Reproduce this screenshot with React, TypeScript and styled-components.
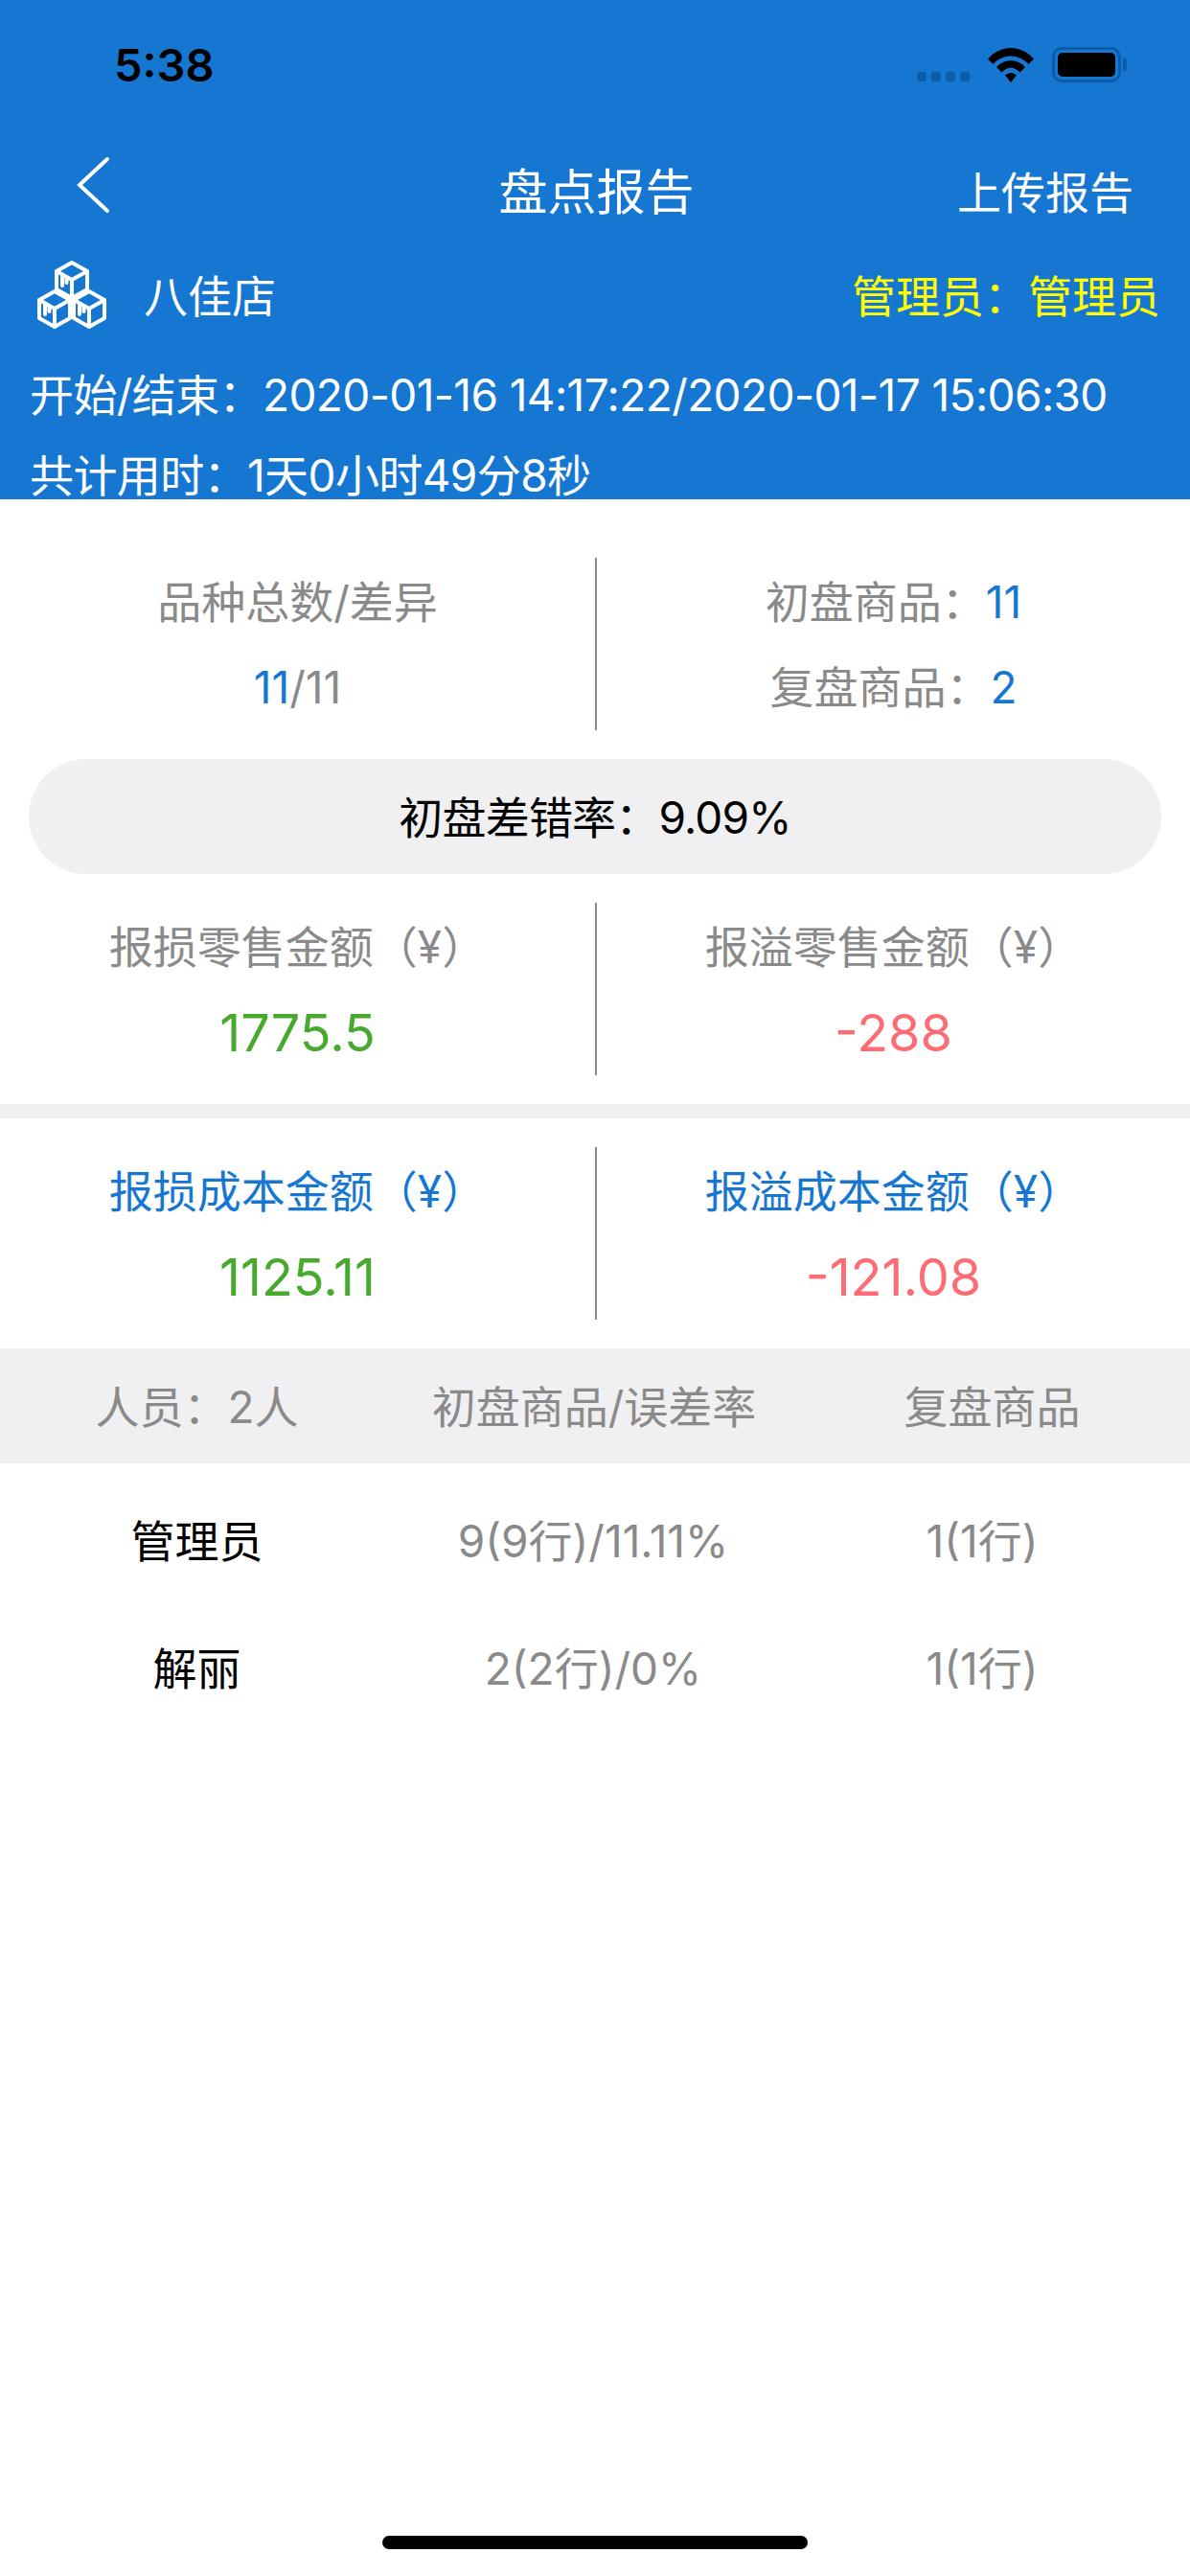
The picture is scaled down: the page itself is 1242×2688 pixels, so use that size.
import React from "react";
import styled, { createGlobalStyle } from "styled-components";

const BLUE = "#1677d2";
const GRAY = "#8a8a8a";
const GREEN = "#48a92f";
const RED = "#fb6c74";
const BAND = "#f0eff2";

const tones: Record<string, string> = { blue: BLUE, gray: GRAY, green: GREEN, red: RED };

const GlobalStyle = createGlobalStyle`
  html, body {
    margin: 0;
    padding: 0;
    background: #fff;
  }
  body {
    font-family: Inter, "Noto Sans CJK SC", sans-serif;
  }
`;

const Page = styled.div`
  position: relative;
  width: 1242px;
  height: 2688px;
  overflow: hidden;
  background: #fff;
`;

const Header = styled.header`
  height: 521px;
  background: ${BLUE};
  color: #fff;
`;

const StatusBar = styled.div`
  height: 136px;
  display: flex;
  justify-content: space-between;
  box-sizing: border-box;
  padding: 41px 72px 0 119px;
`;

const Clock = styled.span`
  font-size: 47px;
  line-height: 54px;
  font-weight: 600;
  color: #000;
`;

const StatusIcons = styled.div`
  display: flex;
  align-items: flex-start;
  padding-top: 8px;
`;

const SignalDots = styled.div`
  display: flex;
  gap: 5px;
  margin-top: 26px;
  margin-right: 19px;
`;

const SignalDot = styled.i`
  width: 10px;
  height: 10px;
  border-radius: 3px;
  background: #0c5ca8;
`;

const WifiIcon = styled.svg`
  width: 48px;
  height: 37px;
  margin-right: 19px;
`;

const Battery = styled.div`
  position: relative;
  width: 72px;
  height: 37px;
  box-sizing: border-box;
  border: 3px solid #0c5ca8;
  border-radius: 10px;
  padding: 3px;

  &::before {
    content: "";
    display: block;
    height: 100%;
    border-radius: 5px;
    background: #000;
  }

  &::after {
    content: "";
    position: absolute;
    top: 8px;
    right: -9px;
    width: 4px;
    height: 14px;
    border-radius: 0 7px 7px 0;
    background: #0c5ca8;
  }
`;

const NavBar = styled.nav`
  height: 114px;
  display: grid;
  grid-template-columns: 1fr auto 1fr;
  align-items: center;
  box-sizing: border-box;
  padding: 0 59px 0 80px;
`;

const BackIcon = styled.svg`
  width: 36px;
  height: 58px;
`;

const NavTitle = styled.h1`
  position: relative;
  left: -9px;
  margin: 16px 0 0;
  font-size: 51px;
  line-height: 60px;
  font-weight: 400;
`;

const NavAction = styled.span`
  justify-self: end;
  margin-top: 16px;
  font-size: 46px;
  line-height: 60px;
`;

const StoreRow = styled.div`
  height: 112px;
  display: flex;
  align-items: center;
  box-sizing: border-box;
  padding: 0 31px 0 38px;
`;

const StoreIcon = styled.svg`
  width: 74px;
  height: 72px;
  margin: 4px 38px 0 0;
`;

const StoreName = styled.span`
  flex: 1;
  font-size: 46px;
`;

const Manager = styled.span`
  font-size: 46px;
  color: #ffff00;
`;

const InfoLines = styled.div`
  display: flex;
  flex-direction: column;
  gap: 32px;
  padding: 24px 0 0 31px;
`;

const InfoLine = styled.div`
  font-size: 46px;
  line-height: 52px;
  letter-spacing: -0.6px;
  white-space: nowrap;
`;

const StatRow = styled.section<{ $top?: number }>`
  display: grid;
  grid-template-columns: 621px 621px;
  height: 180px;
  margin-top: ${(p) => p.$top ?? 30}px;
`;

const StatCell = styled.div<{ $divided?: boolean }>`
  display: flex;
  flex-direction: column;
  align-items: center;
  justify-content: center;
  gap: 37px;
  ${(p) => p.$divided && "border-left: 2px solid #888;"}
`;

const AmountCell = styled(StatCell)`
  gap: 35px;
  padding-top: 4px;
`;

const Label = styled.div<{ $tone?: string }>`
  font-size: 46px;
  line-height: 52px;
  color: ${(p) => tones[p.$tone ?? "gray"]};
  white-space: nowrap;
`;

const Amount = styled.div<{ $tone: string }>`
  font-size: 54px;
  line-height: 58px;
  color: ${(p) => tones[p.$tone]};
`;

const Tone = styled.span<{ $tone: string }>`
  color: ${(p) => tones[p.$tone]};
`;

const RatePill = styled.div`
  height: 120px;
  margin: 30px 30px 0;
  box-sizing: border-box;
  padding-bottom: 4px;
  display: flex;
  align-items: center;
  justify-content: center;
  border-radius: 60px;
  background: ${BAND};
  font-size: 46px;
  letter-spacing: -0.8px;
  color: #000;
`;

const Band = styled.div`
  height: 15px;
  margin-top: 30px;
  background: ${BAND};
`;

const TableHead = styled.div`
  display: grid;
  grid-template-columns: 411px 418px 413px;
  height: 120px;
  box-sizing: border-box;
  padding-bottom: 4px;
  margin-top: 30px;
  align-items: center;
  background: ${BAND};
  font-size: 46px;
  color: ${GRAY};
  text-align: center;
`;

const TableBody = styled.div`
  padding-top: 11px;
`;

const TableRow = styled.div`
  display: grid;
  grid-template-columns: 411px 416px 396px;
  height: 133px;
  align-items: center;
  font-size: 46px;
  color: ${GRAY};
  text-align: center;
`;

const Person = styled.span`
  color: #000;
`;

const HomeIndicator = styled.div`
  position: absolute;
  left: 399px;
  bottom: 28px;
  width: 444px;
  height: 14px;
  border-radius: 7px;
  background: #000;
`;

const Cube = ({ x, y }: { x: number; y: number }) => (
  <g transform={`translate(${x} ${y})`}>
    <path d="M18 2 34 11V30L18 39 2 30V11Z" />
    <path d="M2 11 18 20 34 11M18 20V39" />
    <path d="M8 16V26M12.500 18.500V23" />
  </g>
);

const members = [
  { name: "管理员", first: "9(9行)/11.11%", second: "1(1行)" },
  { name: "解丽", first: "2(2行)/0%", second: "1(1行)" },
];

export default function App() {
  return (
    <Page>
      <GlobalStyle />
      <Header>
        <StatusBar>
          <Clock>5:38</Clock>
          <StatusIcons>
            <SignalDots>
              {[0, 1, 2, 3].map((i) => (
                <SignalDot key={i} />
              ))}
            </SignalDots>
            <WifiIcon viewBox="0 0 48 37">
              <path d="M0 12.500C13-3 35-3 48 12.500L42.500 18C32 6.500 16 6.500 5.500 18Z" />
              <path d="M9 21C17 12 31 12 39 21L33.500 26.500C27.500 20 20.500 20 14.500 26.500Z" />
              <path d="M18 29.500C21.500 26 26.500 26 30 29.500L24 37Z" />
            </WifiIcon>
            <Battery />
          </StatusIcons>
        </StatusBar>
        <NavBar>
          <BackIcon viewBox="0 0 36 58" fill="none" stroke="#fff" strokeWidth="4" strokeLinecap="round">
            <path d="M32 2 3 29 32 56" />
          </BackIcon>
          <NavTitle>盘点报告</NavTitle>
          <NavAction>上传报告</NavAction>
        </NavBar>
        <StoreRow>
          <StoreIcon viewBox="0 0 74 72" fill="none" stroke="#fff" strokeWidth="4" strokeLinejoin="round" strokeLinecap="round">
            <Cube x={19} y={0} />
            <Cube x={1} y={30} />
            <Cube x={37} y={30} />
          </StoreIcon>
          <StoreName>八佳店</StoreName>
          <Manager>管理员：管理员</Manager>
        </StoreRow>
        <InfoLines>
          <InfoLine>开始/结束：2020-01-16 14:17:22/2020-01-17 15:06:30</InfoLine>
          <InfoLine>共计用时：1天0小时49分8秒</InfoLine>
        </InfoLines>
      </Header>

      <StatRow $top={61}>
        <StatCell>
          <Label>品种总数/差异</Label>
          <Label>
            <Tone $tone="blue">11</Tone>/11
          </Label>
        </StatCell>
        <StatCell $divided>
          <Label>
            初盘商品：<Tone $tone="blue">11</Tone>
          </Label>
          <Label>
            复盘商品：<Tone $tone="blue">2</Tone>
          </Label>
        </StatCell>
      </StatRow>

      <RatePill>初盘差错率：9.09%</RatePill>

      <StatRow>
        <AmountCell>
          <Label>报损零售金额（¥）</Label>
          <Amount $tone="green">1775.5</Amount>
        </AmountCell>
        <AmountCell $divided>
          <Label>报溢零售金额（¥）</Label>
          <Amount $tone="red">-288</Amount>
        </AmountCell>
      </StatRow>

      <Band />

      <StatRow>
        <AmountCell>
          <Label $tone="blue">报损成本金额（¥）</Label>
          <Amount $tone="green">1125.11</Amount>
        </AmountCell>
        <AmountCell $divided>
          <Label $tone="blue">报溢成本金额（¥）</Label>
          <Amount $tone="red">-121.08</Amount>
        </AmountCell>
      </StatRow>

      <TableHead>
        <span>人员：2人</span>
        <span>初盘商品/误差率</span>
        <span>复盘商品</span>
      </TableHead>
      <TableBody>
        {members.map((m) => (
          <TableRow key={m.name}>
            <Person>{m.name}</Person>
            <span>{m.first}</span>
            <span>{m.second}</span>
          </TableRow>
        ))}
      </TableBody>
      <HomeIndicator />
    </Page>
  );
}
